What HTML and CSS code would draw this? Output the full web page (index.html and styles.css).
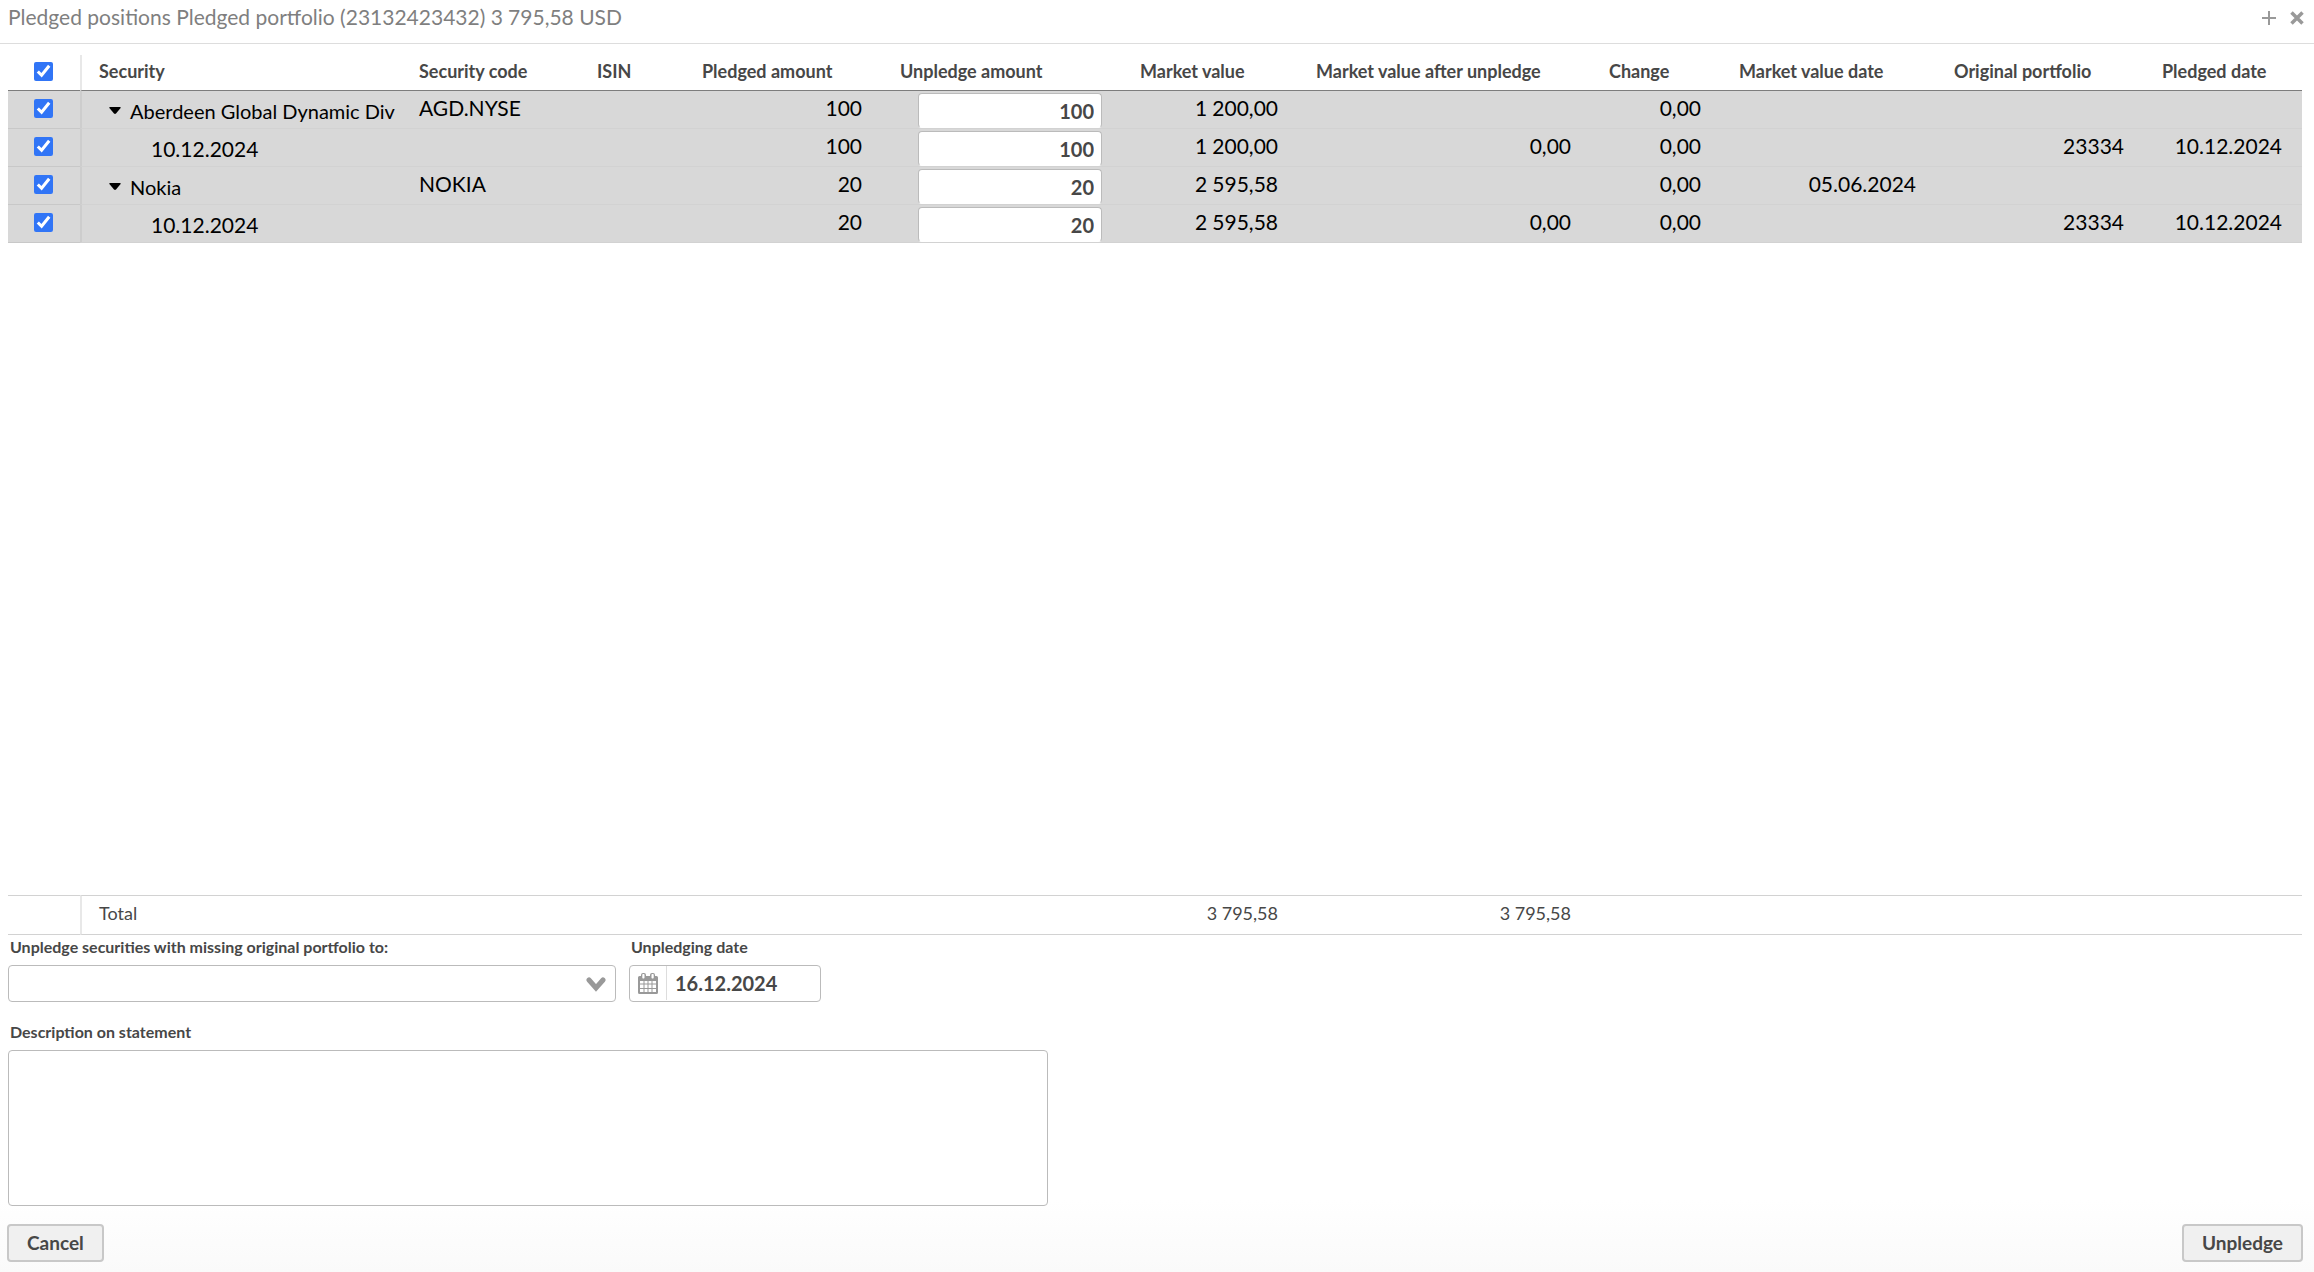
FILE: index.html
```html
<!DOCTYPE html>
<html lang="en">
<head>
<meta charset="utf-8">
<title>Pledged positions</title>
<link rel="stylesheet" href="styles.css">
</head>
<body>
<div class="window">
  <header class="titlebar">
    <h1 class="title">Pledged positions Pledged portfolio (23132423432) 3&#8239;795,58 USD</h1>
    <div class="window-tools">
      <button type="button" class="tool" aria-label="Maximize"><svg width="14" height="14" viewBox="0 0 14 14"><path d="M7 0v14M0 7h14" stroke="#999" stroke-width="2" fill="none"/></svg></button>
      <button type="button" class="tool" aria-label="Close"><svg width="14" height="14" viewBox="0 0 14 14"><path d="M1.500 1.500l11 11M12.500 1.500l-11 11" stroke="#999" stroke-width="3.500" fill="none"/></svg></button>
    </div>
  </header>

  <main class="grid">
    <table class="table">
      <colgroup><col class="c-check"><col><col class="c-code"><col class="c-isin"><col class="c-pledged"><col class="c-unpledge"><col class="c-value"><col class="c-after"><col class="c-change"><col class="c-vdate"><col class="c-portfolio"><col class="c-pdate"></colgroup>
      <thead>
        <tr>
          <th class="check"><input type="checkbox" class="tick" checked aria-label="Select all"></th>
          <th class="name">Security</th><th>Security code</th><th>ISIN</th><th>Pledged amount</th><th>Unpledge amount</th><th>Market value</th><th>Market value after unpledge</th><th>Change</th><th>Market value date</th><th>Original portfolio</th><th>Pledged date</th>
        </tr>
      </thead>
      <tbody>
        <tr>
          <td class="check"><input type="checkbox" class="tick" checked aria-label="Select Aberdeen"></td>
          <td class="name tree"><div class="node"><svg class="caret" width="12" height="7" viewBox="0 0 12 7"><path d="M1 0h10q1 0 .6 1L7 6.500q-1 .8-2 0L.4 1Q0 0 1 0z"/></svg>Aberdeen Global Dynamic Div</div></td>
          <td>AGD.NYSE</td><td></td><td class="num">100</td>
          <td class="edit"><input class="amount" type="text" value="100" aria-label="Unpledge amount"></td>
          <td class="num">1&#8239;200,00</td><td class="num"></td><td class="num">0,00</td><td class="num"></td><td class="num"></td><td class="num"></td>
        </tr>
        <tr>
          <td class="check"><input type="checkbox" class="tick" checked aria-label="Select Aberdeen 10.12.2024"></td>
          <td class="name tree"><div class="node leaf">10.12.2024</div></td>
          <td></td><td></td><td class="num">100</td>
          <td class="edit"><input class="amount" type="text" value="100" aria-label="Unpledge amount"></td>
          <td class="num">1&#8239;200,00</td><td class="num">0,00</td><td class="num">0,00</td><td class="num"></td><td class="num">23334</td><td class="num">10.12.2024</td>
        </tr>
        <tr>
          <td class="check"><input type="checkbox" class="tick" checked aria-label="Select Nokia"></td>
          <td class="name tree"><div class="node"><svg class="caret" width="12" height="7" viewBox="0 0 12 7"><path d="M1 0h10q1 0 .6 1L7 6.500q-1 .8-2 0L.4 1Q0 0 1 0z"/></svg>Nokia</div></td>
          <td>NOKIA</td><td></td><td class="num">20</td>
          <td class="edit"><input class="amount" type="text" value="20" aria-label="Unpledge amount"></td>
          <td class="num">2&#8239;595,58</td><td class="num"></td><td class="num">0,00</td><td class="num">05.06.2024</td><td class="num"></td><td class="num"></td>
        </tr>
        <tr>
          <td class="check"><input type="checkbox" class="tick" checked aria-label="Select Nokia 10.12.2024"></td>
          <td class="name tree"><div class="node leaf">10.12.2024</div></td>
          <td></td><td></td><td class="num">20</td>
          <td class="edit"><input class="amount" type="text" value="20" aria-label="Unpledge amount"></td>
          <td class="num">2&#8239;595,58</td><td class="num">0,00</td><td class="num">0,00</td><td class="num"></td><td class="num">23334</td><td class="num">10.12.2024</td>
        </tr>
      </tbody>
    </table>
    <table class="table totals">
      <colgroup><col class="c-check"><col><col class="c-code"><col class="c-isin"><col class="c-pledged"><col class="c-unpledge"><col class="c-value"><col class="c-after"><col class="c-change"><col class="c-vdate"><col class="c-portfolio"><col class="c-pdate"></colgroup>
      <tbody>
        <tr>
          <td class="check"></td><td class="name">Total</td><td></td><td></td><td></td><td></td><td class="num">3&#8239;795,58</td><td class="num">3&#8239;795,58</td><td></td><td></td><td></td><td></td>
        </tr>
      </tbody>
    </table>
  </main>

  <form class="form">
    <div class="fields">
      <div class="field field-portfolio">
        <label class="label" for="portfolio">Unpledge securities with missing original portfolio to:</label>
        <div class="box">
          <select id="portfolio" class="select"><option></option></select>
          <svg class="chevron" width="20" height="15" viewBox="0 0 20 15"><path d="M3 3l7 8 7-8" fill="none" stroke="#999" stroke-width="5" stroke-linecap="round"/></svg>
        </div>
      </div>
      <div class="field field-date">
        <label class="label" for="date">Unpledging date</label>
        <div class="box">
          <button type="button" class="calendar" aria-label="Open calendar"><svg width="20" height="21" viewBox="0 0 20 21"><path fill="#999" fill-rule="evenodd" d="M1.500 3H3V2q0-2 2-2h1q2 0 2 2v1h4V2q0-2 2-2h1q2 0 2 2v1h1.500Q20 3 20 4.500v15q0 1.500-1.500 1.500h-17Q0 21 0 19.500v-15Q0 3 1.500 3zM5 1q-.7 0-.7.7v3q0 .8.700.8h.800q.7 0 .7-.8v-3Q6.500 1 5.800 1zM14.200 1q-.7 0-.7.7v3q0 .8.700.8h.800q.7 0 .7-.8v-3q0-.7-.7-.7zM2 8v2.500h3.500V8zm4.500 0v2.500h3V8zm4 0v2.500h3V8zm4 0v2.500H18V8zM2 11.500V15h3.500v-3.500zm4.500 0V15h3v-3.500zm4 0V15h3v-3.500zm4 0V15H18v-3.500zM2 16v3h3.500v-3zm4.500 0v3h3v-3zm4 0v3h3v-3zm4 0v3H18v-3z"/></svg></button>
          <input id="date" class="date" type="text" value="16.12.2024">
        </div>
      </div>
    </div>
    <div class="field field-text">
      <label class="label" for="description">Description on statement</label>
      <textarea id="description" class="textarea"></textarea>
    </div>
    <div class="actions">
      <button type="button" class="button">Cancel</button>
      <button type="submit" class="button">Unpledge</button>
    </div>
  </form>
</div>
</body>
</html>
```
FILE: styles.css
```css
*, *::before, *::after { box-sizing: border-box; }

body {
  margin: 0;
  font-family: Lato, "Liberation Sans", sans-serif;
  font-size: 20px;
  color: #474747;
  background: #fff;
}

input, select, textarea, button { font: inherit; color: inherit; margin: 0; }

.window {
  display: flex;
  flex-direction: column;
  min-height: 100vh;
  background: linear-gradient(to top, #fafafa, #fff 72px);
}

/* Title bar */
.titlebar {
  display: flex;
  justify-content: space-between;
  align-items: center;
  height: 44px;
  padding: 0 10px 8px 8px;
  border-bottom: 1px solid #ddd;
}
.title { margin: 0; padding-bottom: 2px; font-size: 21px; font-weight: 400; line-height: 24px; color: #7f7f7f; }
.window-tools { display: flex; gap: 14px; }
.tool { display: flex; padding: 0; border: 0; background: none; }

/* Positions grid */
.grid {
  flex: 1;
  display: flex;
  flex-direction: column;
  justify-content: space-between;
  padding: 11px 12px 0 8px;
}
.table { width: 100%; table-layout: fixed; border-collapse: separate; border-spacing: 0; }
.c-check { width: 72px; }
.c-code { width: 178px; }
.c-isin { width: 105px; }
.c-pledged { width: 198px; }
.c-unpledge { width: 240px; }
.c-value { width: 176px; }
.c-after { width: 293px; }
.c-change { width: 130px; }
.c-vdate { width: 215px; }
.c-portfolio { width: 208px; }
.c-pdate { width: 158px; }

th {
  height: 36px;
  padding: 0 0 4px 18px;
  font-size: 18px;
  font-weight: 700;
  text-align: left;
  white-space: nowrap;
  border-bottom: 1px solid #7d7d7d;
}
td {
  height: 38px;
  padding: 0 20px 4px 18px;
  font-size: 21px;
  line-height: 24px;
  white-space: nowrap;
  color: #000;
  background: #d8d8d8;
  border-bottom: 1px solid #d2d2d2;
}
.num { text-align: right; }
.check { padding: 0 2px 2px 0; text-align: center; }
td.check { padding-bottom: 3px; border-bottom-color: #c8c8c8; }
.name { padding-left: 17px; border-left: 2px solid #e8e8e8; }
td.name { border-left-color: #cdcdcd; }
.tick { display: block; width: 19px; height: 19px; margin: 0 auto; accent-color: #3175f6; }

.tree { padding: 2px 0 0 27px; }
.node {
  display: flex;
  align-items: center;
  overflow: hidden;
  font-size: 20px;
}
.leaf { padding-left: 42px; font-size: 21px; }
.caret { flex: none; margin-right: 9px; }

.edit { padding: 2px 20px 0 36px; vertical-align: top; }
.amount {
  display: block;
  width: 100%;
  height: 35px;
  padding: 0 7px;
  text-align: right;
  font-size: 20px;
  font-weight: 700;
  color: #474747;
  background: #fff;
  border: 1px solid #bbb;
  border-bottom-color: #fff;
  border-radius: 4px;
}

.totals td {
  height: 40px;
  color: #474747;
  background: none;
  font-size: 18px;
  border-top: 1px solid #d2d2d2;
  border-bottom: 1px solid #d2d2d2;
}
.totals td.name { border-left-color: #e8e8e8; }

/* Form below the grid */
.form { padding: 0 11px 10px 7px; }
.fields { display: flex; gap: 13px; padding-left: 1px; }
.label {
  display: block;
  height: 30px;
  padding: 2px 0 0 2px;
  font-size: 16px;
  font-weight: 700;
  line-height: 20px;
}
.field-portfolio { width: 608px; }
.field-date { width: 192px; }
.field-text { max-width: 1041px; margin-top: 18px; padding-left: 1px; }
.box {
  position: relative;
  display: flex;
  height: 37px;
  background: #fff;
  border: 1px solid #bbb;
  border-radius: 4px;
}
.select { width: 100%; border: 0; background: none; appearance: none; padding: 0 40px 0 8px; }
.chevron { position: absolute; right: 9px; top: 11px; pointer-events: none; }
.calendar {
  display: flex;
  justify-content: center;
  align-items: center;
  width: 37px;
  margin-bottom: 1px;
  padding: 0;
  border: 0;
  border-right: 1px solid #ddd;
  background: none;
}
.date { flex: 1; min-width: 0; padding: 0 8px 2px; border: 0; background: none; font-weight: 700; }
.textarea {
  display: block;
  width: 100%;
  height: 156px;
  padding: 8px;
  resize: none;
  background: #fff;
  border: 1px solid #bbb;
  border-radius: 4px;
}
.actions { display: flex; justify-content: space-between; margin-top: 18px; }
.button {
  height: 38px;
  padding: 0 18px;
  font-size: 19px;
  font-weight: 700;
  line-height: 24px;
  color: #474747;
  background: #f0f0f0;
  border: 2px solid #c8c8c8;
  border-radius: 4px;
}
```
